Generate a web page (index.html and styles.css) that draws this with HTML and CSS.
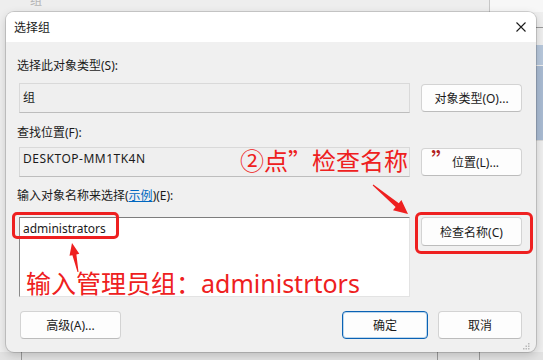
FILE: index.html
```html
<!DOCTYPE html>
<html lang="zh-CN">
<head>
<meta charset="utf-8">
<title>选择组</title>
<link rel="stylesheet" href="styles.css">
</head>
<body>
<div class="desk">
  <div class="bg-label">组</div>
  <div class="dialog">
    <div class="titlebar">
      <span class="title">选择组</span>
      <svg class="close" width="10" height="10" viewBox="0 0 10 10"><path d="M0.5 0.5L9.5 9.5M9.5 0.5L0.5 9.5" stroke="#1b1b1b" stroke-width="1.1" fill="none"/></svg>
    </div>
    <div class="content">
      <div class="label lbl1">选择此对象类型(S):</div>
      <div class="row row1">
        <div class="field f1">组</div>
        <div class="btn btn-side">对象类型(O)...</div>
      </div>
      <div class="label lbl2">查找位置(F):</div>
      <div class="row row2">
        <div class="field f2">DESKTOP-MM1TK4N</div>
        <div class="btn btn-side btn-loc">位置(L)...</div>
      </div>
      <div class="label lbl3">输入对象名称来选择(<span class="link">示例</span>)(E):</div>
      <div class="row row3">
        <div class="textarea">administrators</div>
        <div class="btn btn-check">检查名称(C)</div>
      </div>
      <div class="footer">
        <div class="btn btn-adv">高级(A)...</div>
        <div class="spacer"></div>
        <div class="btn btn-ok">确定</div>
        <div class="btn btn-cancel">取消</div>
      </div>
    </div>
    <svg class="grip" width="7" height="7" viewBox="0 0 7 7"><g fill="#b9b9b9"><rect x="5" y="0" width="1.5" height="1.5"/><rect x="2.5" y="2.5" width="1.5" height="1.5"/><rect x="5" y="2.5" width="1.5" height="1.5"/><rect x="0" y="5" width="1.5" height="1.5"/><rect x="2.5" y="5" width="1.5" height="1.5"/><rect x="5" y="5" width="1.5" height="1.5"/></g></svg>
  </div>

  <div class="mark mark-input"></div>
  <div class="mark mark-check"></div>
  <div class="note note-click">②点”检查名称</div>
  <div class="note note-quote">”</div>
  <div class="note note-input">输入管理员组：administrtors</div>
  <svg class="arrows" width="543" height="360" viewBox="0 0 543 360">
    <polygon fill="#ee2020" points="372.7,185.4 395.6,207.0 393.0,210.2 408,214 401.4,200.1 398.8,203.2 373.3,184.6"/>
    <polygon fill="#ee2020" points="78.5,271.9 76.4,254.4 79.3,253.8 72,243 69.5,255.8 72.4,255.2 77.5,272.1"/>
  </svg>
</div>
</body>
</html>
```

FILE: styles.css
```css
html, body {
  margin: 0;
  padding: 0;
}
body {
  width: 543px;
  height: 360px;
  overflow: hidden;
  font-family: "Noto Sans", "Noto Sans CJK SC", sans-serif;
  font-size: 12px;
  color: #1b1b1b;
}
.desk {
  position: relative;
  width: 543px;
  height: 360px;
  overflow: hidden;
  padding-top: 12px;
  padding-left: 6px;
  box-sizing: border-box;
  background:
    linear-gradient(#c7c7c7, #c7c7c7) 489px 0 / 1px 12px no-repeat,
    linear-gradient(#f7f7f7, #f7f7f7) 490px 0 / 53px 12px no-repeat,
    linear-gradient(#9a9a9a, #9a9a9a) 536px 27px / 7px 1px no-repeat,
    linear-gradient(#b7c7db, #b7c7db) 536px 45px / 7px 20px no-repeat,
    linear-gradient(#a9bbd2, #a9bbd2) 536px 66px / 7px 74px no-repeat,
    linear-gradient(#d8d8d8, #d8d8d8) 536px 140px / 7px 1px no-repeat,
    linear-gradient(#9a9a9a, #9a9a9a) 21px 352px / 1px 8px no-repeat,
    linear-gradient(#9a9a9a, #9a9a9a) 437px 352px / 1px 8px no-repeat,
    linear-gradient(#9a9a9a, #9a9a9a) 479px 352px / 1px 8px no-repeat,
    linear-gradient(#e2e2e2, #e2e2e2) 0 352px / 543px 8px no-repeat,
    #eeeeee;
}
.bg-label {
  position: absolute;
  left: 30px;
  top: -9px;
  font-size: 12px;
  color: #b5b5b5;
  letter-spacing: 6px;
}
.dialog {
  position: relative;
  width: 530px;
  height: 340px;
  background: #f0f0f0;
  border-radius: 8px;
  overflow: hidden;
  box-shadow: 0 0 0 1px rgba(0, 0, 0, 0.14), 0 3px 10px rgba(0, 0, 0, 0.18);
}
.titlebar {
  height: 30px;
  background: #ffffff;
  display: flex;
  align-items: center;
  justify-content: space-between;
  padding: 0 10px 0 8px;
}
.title {
  font-size: 12px;
  color: #1b1b1b;
}
.close {
  display: block;
}
.content {
  padding: 16px 14px 0 13px;
}
.label {
  height: 16px;
  line-height: 16px;
  margin-left: -2px;
  white-space: nowrap;
}
.lbl2 { margin-top: 12px; }
.lbl3 { margin-top: 11px; }
.link {
  color: #0067c0;
  text-decoration: underline;
}
.row {
  display: grid;
  grid-template-columns: 391px 101px;
  column-gap: 11px;
  align-items: start;
}
.row1 { margin-top: 9px; }
.row2 { margin-top: 6px; }
.row3 { margin-top: 13px; }
.field {
  box-sizing: border-box;
  height: 30px;
  background: #efefef;
  border: 1px solid #d9d9d9;
  border-bottom-color: #bdbdbd;
  padding-left: 3px;
  line-height: 16px;
  white-space: nowrap;
}
.f1 { padding-top: 6px; }
.f2 { padding-top: 3px; letter-spacing: 0.5px; }
.textarea {
  box-sizing: border-box;
  height: 80px;
  background: #ffffff;
  border: 1px solid #e3e3e3;
  border-top-color: #7d7d7d;
  border-left-color: #8a8a8a;
  padding: 3px 0 0 3px;
  line-height: 16px;
}
.btn {
  box-sizing: border-box;
  height: 28px;
  background: #fdfdfd;
  border: 1px solid #d3d3d3;
  border-bottom-color: #bcbcbc;
  border-radius: 4px;
  display: flex;
  align-items: center;
  justify-content: center;
  white-space: nowrap;
  color: #1b1b1b;
}
.btn-side { margin-top: 1px; }
.btn-loc { padding-left: 8px; }
.btn-check { height: 29px; }
.footer {
  display: flex;
  margin-top: 14px;
  align-items: center;
}
.btn-adv { width: 101px; margin-left: 1px; }
.spacer { flex: 1; }
.btn-ok {
  width: 86px;
  border-color: #0a62b4;
  box-shadow: inset 0 0 0 1px rgba(0, 103, 192, 0.25);
}
.btn-cancel { width: 84px; margin-left: 10px; }
.grip {
  position: absolute;
  right: 6px;
  bottom: 2px;
}

/* annotation overlays */
.mark {
  position: absolute;
  border: 3px solid #ee2020;
  border-radius: 5px;
  box-sizing: border-box;
}
.mark-input { left: 12px; top: 212px; width: 107px; height: 27px; }
.mark-check { left: 415px; top: 212px; width: 118px; height: 42px; border-radius: 6px; }
.note {
  position: absolute;
  color: #ee2020;
  white-space: nowrap;
  font-family: "Noto Sans CJK SC", sans-serif;
  line-height: 1;
}
.note-click { left: 240px; top: 148px; font-size: 24px; }
.note-quote { left: 431px; top: 148px; font-size: 24px; color: #b02020; }
.note-input {
  left: 26px;
  top: 271px;
  font-size: 25px;
  font-family: "Noto Sans", "Noto Sans CJK SC", sans-serif;
}
.arrows {
  position: absolute;
  left: 0;
  top: 0;
  pointer-events: none;
}
```
